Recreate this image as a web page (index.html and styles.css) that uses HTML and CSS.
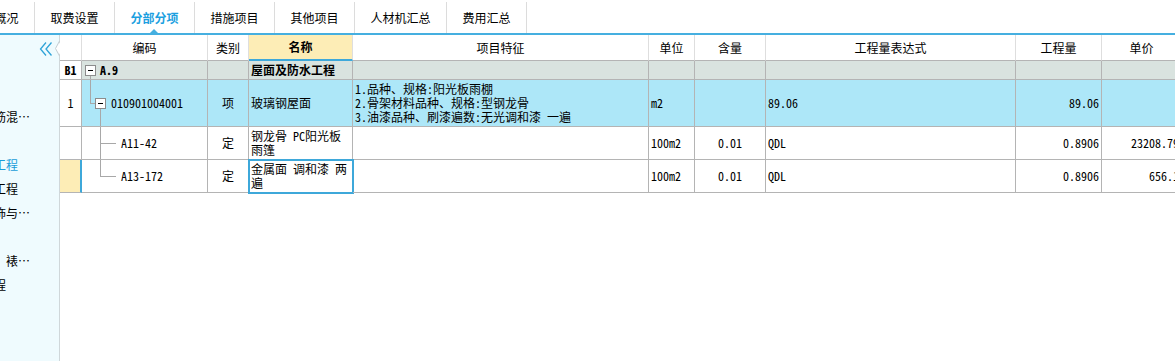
FILE: index.html
```html
<!DOCTYPE html>
<html lang="zh-CN">
<head>
<meta charset="utf-8">
<title>分部分项</title>
<link rel="stylesheet" href="styles.css">
</head>
<body>
<div class="app">
  <nav class="tabs">
    <div class="tab">工程概况</div>
    <div class="tab">取费设置</div>
    <div class="tab active">分部分项</div>
    <div class="tab">措施项目</div>
    <div class="tab">其他项目</div>
    <div class="tab">人材机汇总</div>
    <div class="tab">费用汇总</div>
  </nav>
  <div class="main">
    <aside class="side">
      <div class="side-head">
        <svg class="collapse" width="14" height="14" viewBox="0 0 14 14">
          <polyline points="7,0.5 1.5,7 7,13.5" />
          <polyline points="12.5,0.5 7,7 12.5,13.5" />
        </svg>
      </div>
      <svg class="notch" width="7" height="16" viewBox="0 0 7 16">
        <polygon points="7,0 1.5,7.5 7,15" fill="#fff" />
        <polyline points="5.5,0 1.5,7.5 5.5,15" fill="none" stroke="#c6ced2" />
      </svg>
      <ul class="tree">
        <li>砌筑工程</li>
        <li>混凝土及钢筋混凝土工程</li>
        <li>木结构工程</li>
        <li class="sel">屋面及防水工程</li>
        <li>楼地面装饰工程</li>
        <li>墙、柱面装饰与隔断工程</li>
        <li>天棚工程</li>
        <li>油漆、涂料、裱糊工程</li>
        <li>其他装饰工程</li>
      </ul>
    </aside>
    <section class="grid">
      <div class="row head">
        <div class="c"></div>
        <div class="c">编码</div>
        <div class="c">类别</div>
        <div class="c name-h">名称</div>
        <div class="c">项目特征</div>
        <div class="c">单位</div>
        <div class="c">含量</div>
        <div class="c">工程量表达式</div>
        <div class="c">工程量</div>
        <div class="c">单价</div>
      </div>
      <div class="row part">
        <div class="c num b">B1</div>
        <div class="c code">
          <span class="node"><span class="up"></span><span class="box"></span><span class="dn"></span></span>
          <span class="txt b t1">A.9</span>
        </div>
        <div class="c"></div>
        <div class="c b">屋面及防水工程</div>
        <div class="c"></div>
        <div class="c"></div>
        <div class="c"></div>
        <div class="c"></div>
        <div class="c"></div>
        <div class="c"></div>
      </div>
      <div class="row item">
        <div class="c num">1</div>
        <div class="c code lv1">
          <span class="elbow"></span>
          <span class="node"><span class="up"></span><span class="box"></span><span class="dn"></span></span>
          <span class="txt t2">010901004001</span>
        </div>
        <div class="c ctr">项</div>
        <div class="c">玻璃钢屋面</div>
        <div class="c feat">
          <div>1.品种、规格:阳光板雨棚</div>
          <div>2.骨架材料品种、规格:型钢龙骨</div>
          <div>3.油漆品种、刷漆遍数:无光调和漆 一遍</div>
        </div>
        <div class="c">m2</div>
        <div class="c"></div>
        <div class="c">89.06</div>
        <div class="c r">89.06</div>
        <div class="c r"></div>
      </div>
      <div class="row sub">
        <div class="c num"></div>
        <div class="c code lv2">
          <span class="tee"></span>
          <span class="txt t3">A11-42</span>
        </div>
        <div class="c ctr">定</div>
        <div class="c wrap">钢龙骨 PC阳光板雨篷</div>
        <div class="c"></div>
        <div class="c">100m2</div>
        <div class="c ctr">0.01</div>
        <div class="c">QDL</div>
        <div class="c r">0.8906</div>
        <div class="c r">23208.79</div>
      </div>
      <div class="row sub current">
        <div class="c num cur"></div>
        <div class="c code lv2">
          <span class="tee last"></span>
          <span class="txt t3">A13-172</span>
        </div>
        <div class="c ctr">定</div>
        <div class="c wrap focus">金属面 调和漆 两遍</div>
        <div class="c"></div>
        <div class="c">100m2</div>
        <div class="c ctr">0.01</div>
        <div class="c">QDL</div>
        <div class="c r">0.8906</div>
        <div class="c r">656.1</div>
      </div>
    </section>
  </div>
</div>
</body>
</html>
```

FILE: styles.css
```css
* {
  box-sizing: border-box;
  margin: 0;
  padding: 0;
}

html,
body {
  width: 1175px;
  height: 361px;
  overflow: hidden;
  background: #fff;
}

body {
  font-family: "Noto Sans CJK SC", "Noto Sans", sans-serif;
  font-size: 12px;
  color: #000;
  font-feature-settings: "hwid" 1;
}

/* ---------- tabs ---------- */
.tabs {
  display: flex;
  height: 35px;
  margin-left: -45px;
  border-bottom: 2px solid #45afe0;
}

.tab {
  position: relative;
  margin-top: 2px;
  height: 31px;
  padding: 0 15.5px;
  border-right: 1px solid #dcdcdc;
  display: flex;
  align-items: center;
  white-space: nowrap;
  flex: none;
}

.tab.active {
  color: #1c9fe0;
  font-weight: bold;
}

.tab.active::after {
  content: "";
  position: absolute;
  left: 50%;
  bottom: 0;
  margin-left: -5px;
  border-left: 4px solid transparent;
  border-right: 4px solid transparent;
  border-bottom: 4px solid #45afe0;
}

/* ---------- main ---------- */
.main {
  display: flex;
  height: 326px;
}

.side {
  position: relative;
  flex: none;
  width: 60px;
  background: #effbfe;
  border-right: 1px solid #cfd7da;
}

.side-head {
  height: 28px;
  display: flex;
  justify-content: flex-end;
  align-items: center;
  padding-right: 6px;
}

.collapse polyline {
  fill: none;
  stroke: #2ea3d8;
  stroke-width: 1.3;
}

.notch {
  position: absolute;
  left: 54px;
  top: 6px;
}

.tree {
  list-style: none;
  margin: 18px 0 0 -70px;
}

.tree li {
  width: 102px;
  height: 24px;
  line-height: 24px;
  padding-left: 4px;
  white-space: nowrap;
  overflow: hidden;
  text-overflow: ellipsis;
}

.tree li.sel {
  color: #1a9dd9;
}

/* ---------- grid ---------- */
.grid {
  flex: 1;
  overflow: hidden;
}

.row {
  display: grid;
  grid-template-columns: 22px 126px 41px 104px 296px 46px 71px 250px 86px 80px;
  width: 1122px;
}

.row.head { height: 26px; }
.row.part { height: 19px; background: #d9e3df; }
.row.item { height: 47px; background: #ade7f8; }
.row.sub { height: 33px; }

.c {
  border-right: 1px solid #b4b4b4;
  border-bottom: 1px solid #b4b4b4;
  padding: 0 2px;
  display: flex;
  align-items: center;
  white-space: nowrap;
  overflow: hidden;
  line-height: 14px;
}

.head .c {
  border-right-color: #dedede;
  justify-content: center;
  background: #fff;
}

.head .c.name-h {
  background: #fdedb6;
  font-weight: bold;
  border-bottom: 2px solid #3ea8da;
}

.b { font-weight: bold; }

.num {
  justify-content: center;
  background: #fff;
}

.num.cur {
  background: #fdedb6;
  border-right: 2px solid #3ea8da;
}

.ctr { justify-content: center; }
.r { justify-content: flex-end; }

.wrap {
  white-space: normal;
  align-items: center;
}

.feat {
  flex-direction: column;
  align-items: flex-start;
  justify-content: center;
}

.focus {
  outline: 2px solid #3ea8da;
  outline-offset: -1px;
}

/* tree column */
.code {
  align-items: stretch;
  padding-left: 3px;
}

.code.lv1 { padding-left: 8px; }
.code.lv2 { padding-left: 18px; }

.node {
  flex: none;
  width: 11px;
  display: flex;
  flex-direction: column;
}

.node .up,
.node .dn {
  flex: 1;
}

.node .dn {
  border-left: 1px solid #a8a8a8;
  margin-left: 5px;
  width: 1px;
}

.box {
  position: relative;
  flex: none;
  width: 11px;
  height: 11px;
  border: 1px solid #8c8c8c;
  background: #fff;
}

.box::before {
  content: "";
  position: absolute;
  left: 2px;
  top: 4px;
  width: 5px;
  height: 1px;
  background: #000;
}

.elbow {
  flex: none;
  width: 5px;
  height: 24px;
  border-left: 1px solid #a8a8a8;
  border-bottom: 1px solid #a8a8a8;
}

.tee {
  flex: none;
  width: 16px;
  border-left: 1px solid #a8a8a8;
  background: linear-gradient(#a8a8a8, #a8a8a8) 0 16px / 100% 1px no-repeat;
}

.tee.last {
  border-left: 0;
  background:
    linear-gradient(#a8a8a8, #a8a8a8) 0 0 / 1px 17px no-repeat,
    linear-gradient(#a8a8a8, #a8a8a8) 0 16px / 100% 1px no-repeat;
}

.txt {
  align-self: center;
}

.t1 { margin-left: 4px; }
.t2 { margin-left: 5px; }
.t3 { margin-left: 5px; }
```
